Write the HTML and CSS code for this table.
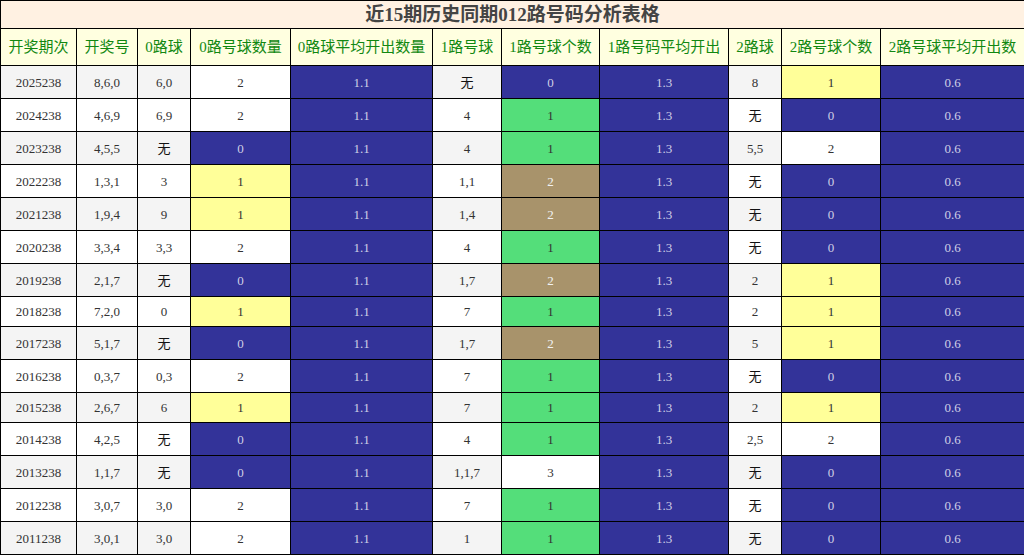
FILE: index.html
```html
<!DOCTYPE html>
<html lang="zh">
<head>
<meta charset="utf-8">
<title>近15期历史同期012路号码分析表格</title>
<link rel="stylesheet" href="styles.css">
</head>
<body>
<table class="grid">
  <colgroup>
    <col class="c1"><col class="c2"><col class="c3"><col class="c4"><col class="c5"><col class="c6"><col class="c7"><col class="c8"><col class="c9"><col class="c10"><col class="c11">
  </colgroup>
  <thead>
    <tr><th class="title" colspan="11">近15期历史同期012路号码分析表格</th></tr>
    <tr class="head">
      <th>开奖期次</th><th>开奖号</th><th>0路球</th><th>0路号球数量</th><th>0路球平均开出数量</th><th>1路号球</th><th>1路号球个数</th><th>1路号码平均开出</th><th>2路球</th><th>2路号球个数</th><th>2路号球平均开出数</th>
    </tr>
  </thead>
  <tbody>
    <tr class="odd"><td>2025238</td><td>8,6,0</td><td>6,0</td><td class="w">2</td><td class="b">1.1</td><td><span class="none">无</span></td><td class="b">0</td><td class="b">1.3</td><td>8</td><td class="y">1</td><td class="b">0.6</td></tr>
    <tr><td>2024238</td><td>4,6,9</td><td>6,9</td><td class="w">2</td><td class="b">1.1</td><td>4</td><td class="g">1</td><td class="b">1.3</td><td><span class="none">无</span></td><td class="b">0</td><td class="b">0.6</td></tr>
    <tr class="odd"><td>2023238</td><td>4,5,5</td><td><span class="none">无</span></td><td class="b">0</td><td class="b">1.1</td><td>4</td><td class="g">1</td><td class="b">1.3</td><td>5,5</td><td class="w">2</td><td class="b">0.6</td></tr>
    <tr><td>2022238</td><td>1,3,1</td><td>3</td><td class="y">1</td><td class="b">1.1</td><td>1,1</td><td class="t">2</td><td class="b">1.3</td><td><span class="none">无</span></td><td class="b">0</td><td class="b">0.6</td></tr>
    <tr class="odd"><td>2021238</td><td>1,9,4</td><td>9</td><td class="y">1</td><td class="b">1.1</td><td>1,4</td><td class="t">2</td><td class="b">1.3</td><td><span class="none">无</span></td><td class="b">0</td><td class="b">0.6</td></tr>
    <tr><td>2020238</td><td>3,3,4</td><td>3,3</td><td class="w">2</td><td class="b">1.1</td><td>4</td><td class="g">1</td><td class="b">1.3</td><td><span class="none">无</span></td><td class="b">0</td><td class="b">0.6</td></tr>
    <tr class="odd"><td>2019238</td><td>2,1,7</td><td><span class="none">无</span></td><td class="b">0</td><td class="b">1.1</td><td>1,7</td><td class="t">2</td><td class="b">1.3</td><td>2</td><td class="y">1</td><td class="b">0.6</td></tr>
    <tr><td>2018238</td><td>7,2,0</td><td>0</td><td class="y">1</td><td class="b">1.1</td><td>7</td><td class="g">1</td><td class="b">1.3</td><td>2</td><td class="y">1</td><td class="b">0.6</td></tr>
    <tr class="odd"><td>2017238</td><td>5,1,7</td><td><span class="none">无</span></td><td class="b">0</td><td class="b">1.1</td><td>1,7</td><td class="t">2</td><td class="b">1.3</td><td>5</td><td class="y">1</td><td class="b">0.6</td></tr>
    <tr><td>2016238</td><td>0,3,7</td><td>0,3</td><td class="w">2</td><td class="b">1.1</td><td>7</td><td class="g">1</td><td class="b">1.3</td><td><span class="none">无</span></td><td class="b">0</td><td class="b">0.6</td></tr>
    <tr class="odd"><td>2015238</td><td>2,6,7</td><td>6</td><td class="y">1</td><td class="b">1.1</td><td>7</td><td class="g">1</td><td class="b">1.3</td><td>2</td><td class="y">1</td><td class="b">0.6</td></tr>
    <tr><td>2014238</td><td>4,2,5</td><td><span class="none">无</span></td><td class="b">0</td><td class="b">1.1</td><td>4</td><td class="g">1</td><td class="b">1.3</td><td>2,5</td><td class="w">2</td><td class="b">0.6</td></tr>
    <tr class="odd"><td>2013238</td><td>1,1,7</td><td><span class="none">无</span></td><td class="b">0</td><td class="b">1.1</td><td>1,1,7</td><td class="w">3</td><td class="b">1.3</td><td><span class="none">无</span></td><td class="b">0</td><td class="b">0.6</td></tr>
    <tr><td>2012238</td><td>3,0,7</td><td>3,0</td><td class="w">2</td><td class="b">1.1</td><td>7</td><td class="g">1</td><td class="b">1.3</td><td><span class="none">无</span></td><td class="b">0</td><td class="b">0.6</td></tr>
    <tr class="odd"><td>2011238</td><td>3,0,1</td><td>3,0</td><td class="w">2</td><td class="b">1.1</td><td>1</td><td class="g">1</td><td class="b">1.3</td><td><span class="none">无</span></td><td class="b">0</td><td class="b">0.6</td></tr>
  </tbody>
</table>
</body>
</html>
```

FILE: styles.css
```css
html, body {
  margin: 0;
  padding: 0;
  background: #ffffff;
}

.grid {
  width: 1024px;
  table-layout: fixed;
  border-collapse: collapse;
  font-family: "Liberation Serif", "Noto Sans CJK SC", serif;
  color: #333333;
}

.c1 { width: 76px; }
.c2 { width: 61px; }
.c3 { width: 53px; }
.c4 { width: 100px; }
.c5 { width: 142px; }
.c6 { width: 69px; }
.c7 { width: 98px; }
.c8 { width: 129px; }
.c9 { width: 53px; }
.c10 { width: 99px; }
.c11 { width: 144px; }

.grid th,
.grid td {
  border: 1px solid #000000;
  text-align: center;
  white-space: nowrap;
  overflow: hidden;
}

.title {
  background: #fff1e2;
  color: #444444;
  font-size: 19px;
  font-weight: bold;
  line-height: 27px;
  padding: 0;
}

.head th {
  background: #ffffe0;
  color: #118811;
  font-size: 15px;
  font-weight: normal;
  line-height: 22px;
  padding: 7px 2px;
}

.grid td {
  font-size: 13px;
  line-height: 16px;
  padding: 7px 2px 6px;
  background: #ffffff;
}

.none {
  display: inline-block;
  line-height: 19px;
  vertical-align: top;
  color: #111111;
}

.grid tr.odd td {
  background: #f4f4f4;
}

.grid tr td.w { background: #ffffff; }
.grid tr td.y { background: #ffff99; }
.grid tr td.b { background: #333399; color: #cfcfe6; }
.grid tr td.g { background: #54de7a; }
.grid tr td.t { background: #a8936b; color: #f2f2f2; }
```
